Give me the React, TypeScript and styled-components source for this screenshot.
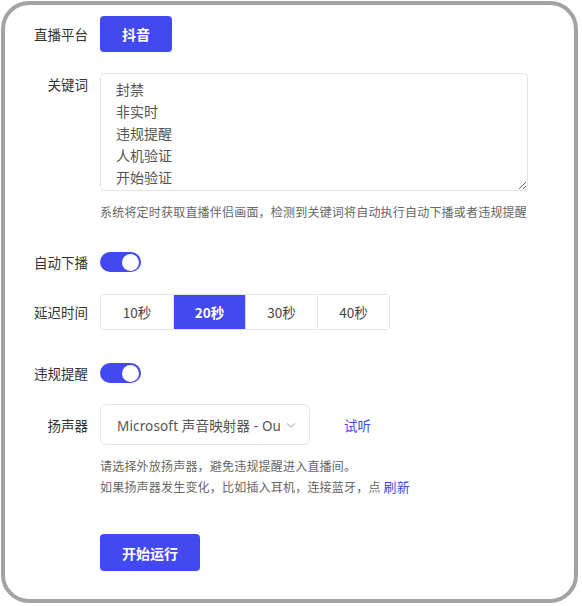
import React from "react";
import styled, { createGlobalStyle } from "styled-components";

const BLUE = "#4349f0";

const Global = createGlobalStyle`
  html, body { margin: 0; padding: 0; background: #fff; }
  body { font-family: "Noto Sans CJK SC", "Noto Sans", sans-serif; color: #333; }
  * { box-sizing: border-box; }
`;

const Frame = styled.div`
  margin: 1px 0 0 1px;
  width: 577px;
  height: 602px;
  border: 4px solid #a3a3a3;
  border-radius: 28px;
  background: #fff;
  padding-top: 11px;
  display: flex;
  flex-direction: column;
`;

const Row = styled.div<{ $top?: number; $align?: string }>`
  display: flex;
  align-items: ${(p) => p.$align || "center"};
  margin-top: ${(p) => p.$top || 0}px;
  gap: 12px;
`;

const Label = styled.div`
  width: 83px;
  text-align: right;
  font-size: 13.5px;
  line-height: 22px;
  color: #333;
  flex-shrink: 0;
`;

const Indented = styled.div<{ $top?: number }>`
  margin-left: 95px;
  margin-top: ${(p) => p.$top || 0}px;
`;

const PrimaryButton = styled.button<{ $w: number; $h: number }>`
  width: ${(p) => p.$w}px;
  height: ${(p) => p.$h}px;
  background: ${BLUE};
  color: #fff;
  border: none;
  border-radius: 4px;
  font-family: "Noto Sans CJK SC", sans-serif;
  font-weight: 700;
  font-size: 14px;
  padding: 0;
`;

const TextArea = styled.textarea`
  width: 428px;
  height: 118px;
  border: 1px solid #e4e4e4;
  border-radius: 4px;
  padding: 4px 15px;
  font-family: "Noto Sans CJK SC", sans-serif;
  font-size: 14px;
  line-height: 22px;
  color: #555;
  outline: none;
  display: block;
  overflow: hidden;
`;

const Hint = styled.div<{ $lh?: number }>`
  font-size: 12px;
  letter-spacing: 0.2px;
  line-height: ${(p) => p.$lh || 20}px;
  color: #666;
  white-space: nowrap;
`;

const Switch = styled.div`
  width: 41px;
  height: 20px;
  border-radius: 10px;
  background: ${BLUE};
  display: flex;
  align-items: center;
  justify-content: flex-end;
  padding: 0 2px;
`;

const Knob = styled.div`
  width: 17px;
  height: 17px;
  border-radius: 50%;
  background: #fff;
`;

const Segments = styled.div`
  display: flex;
  height: 36px;
  border: 1px solid #e4e4e4;
  border-radius: 4px;
  overflow: hidden;
`;

const Segment = styled.div<{ $active?: boolean }>`
  width: 72px;
  display: flex;
  align-items: center;
  justify-content: center;
  font-size: 13.5px;
  color: ${(p) => (p.$active ? "#fff" : "#444")};
  background: ${(p) => (p.$active ? BLUE : "#fff")};
  font-weight: ${(p) => (p.$active ? 700 : 400)};
  & + & { border-left: 1px solid #e4e4e4; }
`;

const Select = styled.div`
  width: 210px;
  height: 41px;
  border: 1px solid #e6e6e6;
  border-radius: 6px;
  display: flex;
  align-items: center;
  padding: 0 12px 0 16px;
  gap: 5px;
`;

const SelectText = styled.span`
  flex: 1;
  overflow: hidden;
  white-space: nowrap;
  font-size: 13.5px;
  letter-spacing: 0.15px;
  color: #555;
  font-family: "Noto Sans", "Noto Sans CJK SC", sans-serif;
`;

const Link = styled.span`
  color: ${BLUE};
  font-size: 13.5px;
`;

const InlineLink = styled.span`
  color: ${BLUE};
  font-size: 13px;
`;

const Spacer = styled.div`
  width: 10px;
`;

export default function App() {
  return (
    <>
      <Global />
      <Frame>
        <Row>
          <Label>直播平台</Label>
          <PrimaryButton $w={72} $h={36}>抖音</PrimaryButton>
        </Row>
        <Row $top={21} $align="flex-start">
          <Label>关键词</Label>
          <TextArea
            readOnly
            value={"封禁\n非实时\n违规提醒\n人机验证\n开始验证"}
          />
        </Row>
        <Indented $top={11}>
          <Hint>系统将定时获取直播伴侣画面，检测到关键词将自动执行自动下播或者违规提醒</Hint>
        </Indented>
        <Row $top={29}>
          <Label>自动下播</Label>
          <Switch>
            <Knob />
          </Switch>
        </Row>
        <Row $top={21}>
          <Label>延迟时间</Label>
          <Segments>
            <Segment>10秒</Segment>
            <Segment $active>20秒</Segment>
            <Segment>30秒</Segment>
            <Segment>40秒</Segment>
          </Segments>
        </Row>
        <Row $top={32}>
          <Label>违规提醒</Label>
          <Switch>
            <Knob />
          </Switch>
        </Row>
        <Row $top={20}>
          <Label>扬声器</Label>
          <Select>
            <SelectText>Microsoft 声音映射器 - Output</SelectText>
            <svg width="12" height="12" viewBox="0 0 12 12" fill="none">
              <path d="M2 4.5 L6 8 L10 4.5" stroke="#bdbdbd" strokeWidth="1.1" />
            </svg>
          </Select>
          <Spacer />
          <Link>试听</Link>
        </Row>
        <Indented $top={10}>
          <Hint $lh={21}>请选择外放扬声器，避免违规提醒进入直播间。</Hint>
          <Hint $lh={21}>
            如果扬声器发生变化，比如插入耳机，连接蓝牙，点 <InlineLink>刷新</InlineLink>
          </Hint>
        </Indented>
        <Indented $top={37}>
          <PrimaryButton $w={100} $h={37}>开始运行</PrimaryButton>
        </Indented>
      </Frame>
    </>
  );
}
